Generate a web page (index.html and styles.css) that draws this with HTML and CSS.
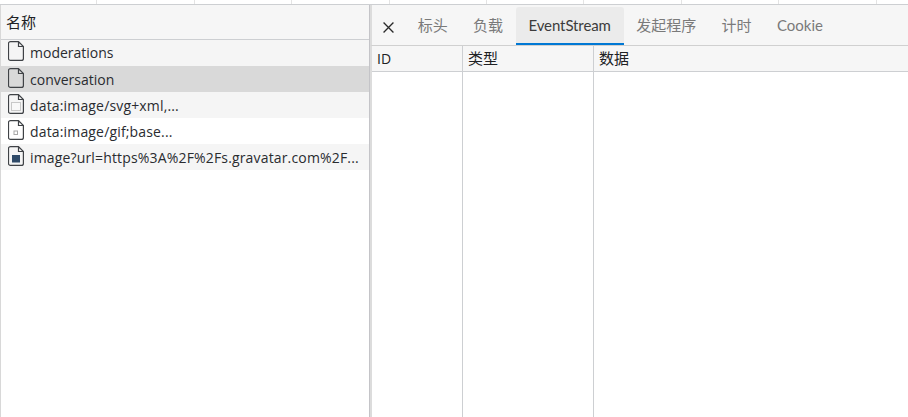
FILE: index.html
```html
<!DOCTYPE html>
<html lang="zh-CN">
<head>
<meta charset="utf-8">
<title>Network</title>
<link rel="stylesheet" href="styles.css">
</head>
<body>
<div class="ruler">
  <i></i><i></i><i></i><i></i><i></i><i></i><i></i><i></i><i></i>
</div>
<div class="main">
  <section class="list">
    <div class="list-head">名称</div>
    <div class="row alt first">
      <svg class="ic" viewBox="0 0 16 20"><path d="M2.500 .6H10.500L15.400 5.500V17.400a2 2 0 0 1-2 2H2.500a2 2 0 0 1-2-2V2.600a2 2 0 0 1 2-2Z M10.500 .6V5.500H15.400" fill="none" stroke="#3f4246" stroke-width="1.200"/></svg>
      <span>moderations</span>
    </div>
    <div class="row sel">
      <svg class="ic" viewBox="0 0 16 20"><path d="M2.500 .6H10.500L15.400 5.500V17.400a2 2 0 0 1-2 2H2.500a2 2 0 0 1-2-2V2.600a2 2 0 0 1 2-2Z M10.500 .6V5.500H15.400" fill="none" stroke="#3f4246" stroke-width="1.200"/></svg>
      <span>conversation</span>
    </div>
    <div class="row alt wide">
      <svg class="ic" viewBox="0 0 16 20"><path d="M2.500 .6H10.500L15.400 5.500V17.400a2 2 0 0 1-2 2H2.500a2 2 0 0 1-2-2V2.600a2 2 0 0 1 2-2Z M10.500 .6V5.500H15.400" fill="none" stroke="#3f4246" stroke-width="1.200"/><rect x="3.500" y="8.500" width="9" height="8" fill="#f8f8f8" stroke="#c8c8c8"/></svg>
      <span>data:image/svg+xml,...</span>
    </div>
    <div class="row wide">
      <svg class="ic" viewBox="0 0 16 20"><path d="M2.500 .6H10.500L15.400 5.500V17.400a2 2 0 0 1-2 2H2.500a2 2 0 0 1-2-2V2.600a2 2 0 0 1 2-2Z M10.500 .6V5.500H15.400" fill="none" stroke="#3f4246" stroke-width="1.200"/><rect x="6" y="11" width="3.500" height="3.500" fill="none" stroke="#a8a8a8"/></svg>
      <span>data:image/gif;base...</span>
    </div>
    <div class="row alt wide">
      <svg class="ic" viewBox="0 0 16 20"><path d="M2.500 .6H10.500L15.400 5.500V17.400a2 2 0 0 1-2 2H2.500a2 2 0 0 1-2-2V2.600a2 2 0 0 1 2-2Z M10.500 .6V5.500H15.400" fill="none" stroke="#3f4246" stroke-width="1.200"/><rect x="4" y="9" width="8" height="7.500" fill="#2f4a68"/></svg>
      <span>image?url=https%3A%2F%2Fs.gravatar.com%2F...</span>
    </div>
  </section>
  <section class="detail">
    <nav class="tabs">
      <button class="close" aria-label="关闭">
        <svg viewBox="0 0 10 10"><path d="M.5 .5 9.500 9.500M9.500 .5 .5 9.500" stroke="#2a2a2a" stroke-width="1.200" fill="none"/></svg>
      </button>
      <span class="tab">标头</span>
      <span class="tab">负载</span>
      <span class="tab active">EventStream</span>
      <span class="tab">发起程序</span>
      <span class="tab">计时</span>
      <span class="tab">Cookie</span>
    </nav>
    <div class="grid">
      <div class="col c1"><div class="col-head latin">ID</div></div>
      <div class="col c2"><div class="col-head">类型</div></div>
      <div class="col c3"><div class="col-head">数据</div></div>
    </div>
  </section>
</div>
</body>
</html>
```
FILE: styles.css
```css
* { box-sizing: border-box; }
html, body { height: 100%; }
body {
  margin: 0;
  display: flex;
  flex-direction: column;
  background: #fff;
  color: #202124;
  font-family: "Open Sans", "Noto Sans CJK SC", sans-serif;
  font-size: 14px;
  overflow: hidden;
}
.ruler {
  height: 5px;
  flex: none;
  display: flex;
  overflow: hidden;
  border-bottom: 1px solid #cdcfd2;
}
.ruler i {
  width: 97.400px;
  flex: none;
  border-right: 1px solid #e4e4e4;
}
.main { flex: 1; display: flex; min-height: 0; }
.list {
  width: 369px;
  flex: none;
  border-left: 1px solid #d8d8d8;
}
.list-head {
  height: 35px;
  background: #f6f6f6;
  border-bottom: 1px solid #cdcfd2;
  padding-left: 5px;
  line-height: 34px;
  font-size: 15px;
}
.row {
  height: 26px;
  display: flex;
  align-items: center;
  padding-left: 7px;
  gap: 6px;
  white-space: nowrap;
  font-size: 14px;
  color: #2a2c30;
}
.row.first { padding-bottom: 2px; }
.row.wide { letter-spacing: .16px; }
.row.alt { background: #f5f5f5; }
.row.sel { background: #d9d9d9; }
.ic { width: 16px; height: 20px; flex: none; margin-bottom: 3px; }
.row.first .ic { margin-bottom: 2px; }
.detail {
  flex: 1;
  min-width: 0;
  display: flex;
  flex-direction: column;
  border-left: 1px solid #c4c4c8;
}
.tabs {
  height: 41px;
  flex: none;
  display: flex;
  align-items: stretch;
  background: #f6f6f6;
  border-bottom: 1px solid #d0d0d0;
  border-left: 2px solid #dcdcdc;
  padding: 2px 0 0 0;
}
.close {
  width: 33px;
  padding: 3px 0 0 0;
  background: none;
  border: 0;
  display: flex;
  align-items: center;
  justify-content: center;
}
.close svg { width: 11px; height: 11px; }
.tab {
  display: flex;
  align-items: center;
  padding: 0 12.700px 1px;
  color: #7a7a7a;
  font-family: "Lato", "Noto Sans CJK SC", sans-serif;
  font-size: 15px;
  border-bottom: 2px solid transparent;
}
.tab.active {
  background: #ebebeb;
  color: #3c3c3c;
  border-bottom-color: #0078d4;
  letter-spacing: -.1px;
  border-radius: 3px 3px 0 0;
}
.grid { flex: 1; display: flex; min-height: 0; border-left: 2px solid #dcdcdc; }
.col { border-right: 1px solid #cdcfd2; }
.c1 { width: 91px; }
.c2 { width: 131px; }
.c3 { flex: 1; border-right: 0; }
.col-head {
  height: 26px;
  background: #f6f6f6;
  border-bottom: 1px solid #cdcfd2;
  padding-left: 5px;
  line-height: 25px;
  font-size: 15px;
  color: #202124;
}
.col-head.latin { font-size: 14px; }
```
